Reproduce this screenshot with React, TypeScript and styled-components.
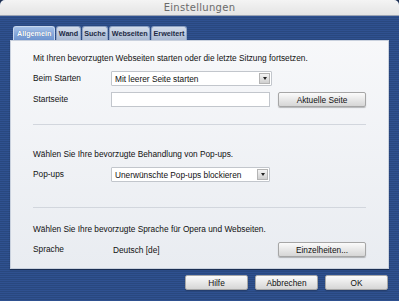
import React from 'react';
import styled, { createGlobalStyle } from 'styled-components';

const GlobalStyle = createGlobalStyle`
  html, body {
    margin: 0;
    padding: 0;
    background: #1e2f4f;
  }
  body {
    font-family: "Liberation Sans", Arial, sans-serif;
  }
`;

const Window = styled.div`
  width: 399px;
  height: 301px;
  display: flex;
  flex-direction: column;
  border-radius: 5px 5px 0 0;
  overflow: hidden;
  background: repeating-linear-gradient(
    to bottom,
    #2f5190 0px,
    #2f5190 1px,
    #29487f 1px,
    #29487f 2px
  );
`;

const TitleBar = styled.div`
  height: 15px;
  display: flex;
  align-items: center;
  justify-content: center;
  background: linear-gradient(to bottom, #f4f4f4, #e4e4e4);
  border-bottom: 1px solid #9aa3b3;
  color: #6a6a6a;
  font-family: "DejaVu Sans", sans-serif;
  font-size: 10px;
  letter-spacing: 0.3px;
`;

const Body = styled.div`
  flex: 1;
  display: flex;
  flex-direction: column;
  padding: 10px 10px 0 10px;
`;

const Tabs = styled.div`
  display: flex;
  gap: 1px;
  padding-left: 3px;
  height: 14px;
`;

const Tab = styled.div<{ $active?: boolean }>`
  display: flex;
  align-items: center;
  padding: 0 ${p => (p.$active ? 3 : 1.5)}px;
  font-size: 7.2px;
  font-weight: bold;
  border-radius: 3px 3px 0 0;
  border: 1px solid ${p => (p.$active ? '#c8d8ef' : '#8ea2c4')};
  border-bottom: none;
  color: ${p => (p.$active ? '#ffffff' : '#1c2a44')};
  background: ${p =>
    p.$active
      ? 'linear-gradient(to bottom, #a4c0e8, #6e94cf)'
      : 'linear-gradient(to bottom, #d3dcea, #a9b9d2)'};
  text-shadow: ${p => (p.$active ? '0 0 1px #3a5d98' : 'none')};
`;

const Panel = styled.div`
  height: 229px;
  display: flex;
  flex-direction: column;
  padding: 11px 22px 0 22px;
  box-sizing: border-box;
  background: linear-gradient(to bottom, #f7f8fa, #e9ecf1);
  border: 1px solid #c9d1de;
  box-shadow: 0 1px 1px rgba(0, 0, 0, 0.35);
  color: #111;
  font-size: 8.3px;
`;

const Section = styled.div<{ $pad: number; $space: number }>`
  display: flex;
  flex-direction: column;
  gap: 6px;
  padding-bottom: ${p => p.$pad}px;
  margin-bottom: ${p => p.$space}px;
  border-bottom: 1px solid #d2d6dd;
  &:last-child {
    border-bottom: none;
  }
`;

const Intro = styled.div`
  height: 13px;
  line-height: 13px;
`;

const Row = styled.div`
  display: grid;
  grid-template-columns: 78px 159px 8px 88px;
  align-items: center;
  height: 15px;
`;

const Label = styled.div`
  line-height: 15px;
`;

const Value = styled.div`
  padding-left: 2px;
`;

const Select = styled.div<{ $wide?: boolean }>`
  width: ${p => (p.$wide ? '161px' : '159px')};
  height: 15px;
  display: flex;
  align-items: center;
  justify-content: space-between;
  box-sizing: border-box;
  padding-left: 3px;
  background: #ffffff;
  border: 1px solid #c2c6cc;
  border-radius: 1px;
`;

const SelectArrow = styled.div`
  width: 11px;
  height: 11px;
  margin-right: 1px;
  display: flex;
  align-items: center;
  justify-content: center;
  background: linear-gradient(to bottom, #f4f4f4, #cfcfcf);
  border: 1px solid #b4b4b4;
  box-sizing: border-box;
  &::after {
    content: '';
    border-left: 2.5px solid transparent;
    border-right: 2.5px solid transparent;
    border-top: 3px solid #222;
  }
`;

const Input = styled.div`
  height: 15px;
  box-sizing: border-box;
  background: #ffffff;
  border: 1px solid #c2c6cc;
`;

const Button = styled.div<{ $width?: number }>`
  width: ${p => (p.$width ? `${p.$width}px` : '100%')};
  height: 15px;
  grid-column: 4;
  display: flex;
  align-items: center;
  justify-content: center;
  box-sizing: border-box;
  font-size: 8.3px;
  color: #111;
  background: linear-gradient(to bottom, #fbfbfb 0%, #e8e8e8 50%, #d6d6d6 100%);
  border: 1px solid #a6a6a6;
  border-radius: 2px;
  box-shadow: 0 1px 1px rgba(0, 0, 0, 0.25);
`;

const Footer = styled.div`
  display: flex;
  justify-content: flex-end;
  gap: 7px;
  padding: 6px 1px 0 0;
`;

const SelectBox = ({ text, wide }: { text: string; wide?: boolean }) => (
  <Select $wide={wide}>
    <span>{text}</span>
    <SelectArrow />
  </Select>
);

export default function App() {
  return (
    <>
      <GlobalStyle />
      <Window>
        <TitleBar>Einstellungen</TitleBar>
        <Body>
          <Tabs>
            <Tab $active>Allgemein</Tab>
            <Tab>Wand</Tab>
            <Tab>Suche</Tab>
            <Tab>Webseiten</Tab>
            <Tab>Erweitert</Tab>
          </Tabs>
          <Panel>
            <Section $pad={17} $space={23}>
              <Intro>Mit Ihren bevorzugten Webseiten starten oder die letzte Sitzung fortsetzen.</Intro>
              <Row>
                <Label>Beim Starten</Label>
                <SelectBox text="Mit leerer Seite starten" wide />
              </Row>
              <Row>
                <Label>Startseite</Label>
                <Input />
                <span />
                <Button>Aktuelle Seite</Button>
              </Row>
            </Section>
            <Section $pad={25} $space={15}>
              <Intro>Wählen Sie Ihre bevorzugte Behandlung von Pop-ups.</Intro>
              <Row>
                <Label>Pop-ups</Label>
                <SelectBox text="Unerwünschte Pop-ups blockieren" />
              </Row>
            </Section>
            <Section $pad={0} $space={0}>
              <Intro>Wählen Sie Ihre bevorzugte Sprache für Opera und Webseiten.</Intro>
              <Row>
                <Label>Sprache</Label>
                <Value>Deutsch [de]</Value>
                <span />
                <Button>Einzelheiten...</Button>
              </Row>
            </Section>
          </Panel>
          <Footer>
            <Button $width={63}>Hilfe</Button>
            <Button $width={63}>Abbrechen</Button>
            <Button $width={63}>OK</Button>
          </Footer>
        </Body>
      </Window>
    </>
  );
}
